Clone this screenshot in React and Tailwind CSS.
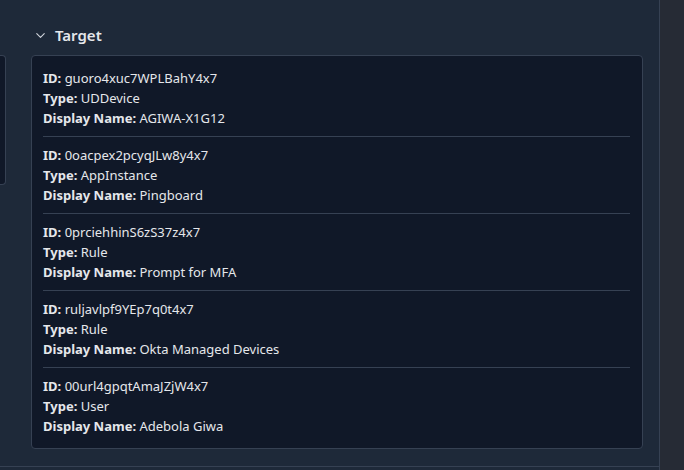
import { ChevronDown } from 'lucide-react';

const targets = [
    { id: 'guoro4xuc7WPLBahY4x7', type: 'UDDevice', name: 'AGIWA-X1G12' },
    { id: '0oacpex2pcyqJLw8y4x7', type: 'AppInstance', name: 'Pingboard' },
    { id: '0prciehhinS6zS37z4x7', type: 'Rule', name: 'Prompt for MFA' },
    { id: 'ruljavlpf9YEp7q0t4x7', type: 'Rule', name: 'Okta Managed Devices' },
    { id: '00url4gpqtAmaJZjW4x7', type: 'User', name: 'Adebola Giwa' },
];

function Field({ label, value }) {
    return (
        <div className="leading-5">
            <span className="font-bold">{label}:</span> {value}
        </div>
    );
}

export default function App() {
    return (
        <div
            className="flex h-[470px] w-[684px] overflow-hidden text-[13px] text-gray-200"
            style={{ fontFamily: '"Noto Sans", "Open Sans", sans-serif' }}
        >
            <div className="flex w-[660px] flex-col border-r border-gray-700 bg-gray-800">
                <div className="flex border-b border-gray-700 pb-[17px]">
                    {/* previous card, mostly scrolled out of view */}
                    <div className="mt-[55px] h-[130px] w-[6px] rounded-r border-y border-r border-gray-700 bg-gray-900" />

                    <div className="ml-[25px] w-[612px] pt-[23px]">
                        <div className="mb-2 flex items-center gap-[7px] pl-[2px] text-[15px] leading-6 font-semibold text-gray-200">
                            <ChevronDown className="h-[15px] w-[15px] text-gray-300" strokeWidth={1.75} />
                            Target
                        </div>
                        <div className="rounded border border-gray-700 bg-gray-900 p-3 pl-[11px]">
                            {targets.map((t, i) => (
                                <div
                                    key={t.id}
                                    className={i < targets.length - 1 ? 'mb-2 border-b border-gray-700 pb-2' : ''}
                                >
                                    <Field label="ID" value={t.id} />
                                    <Field label="Type" value={t.type} />
                                    <Field label="Display Name" value={t.name} />
                                </div>
                            ))}
                        </div>
                    </div>
                </div>
            </div>
            <div className="flex-1 bg-[#262b35]" />
        </div>
    );
}
